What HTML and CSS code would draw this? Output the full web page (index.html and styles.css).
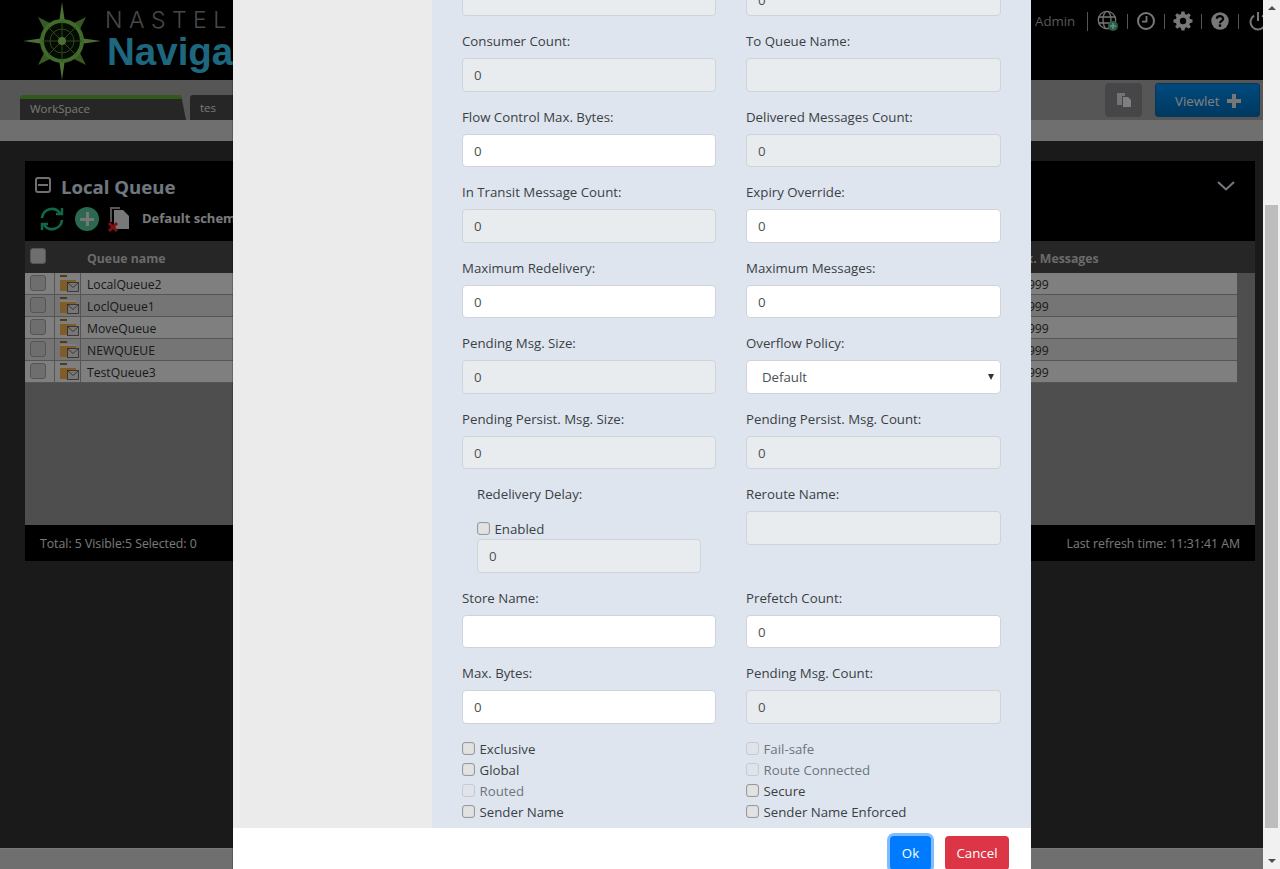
FILE: index.html
```html
<!DOCTYPE html>
<html lang="en">
<head>
  <meta charset="UTF-8" />
  <title>Navigator - Local Queue</title>
  <link rel="stylesheet" href="styles.css">
</head>
<body>

  <div class="page">
    <div class="top-header">
      <div class="logo">
        <svg class="logo-star" width="78" height="78" viewBox="0 0 78 78">
          <path d="M39 0 L42.5 24 L54 35.5 L78 39 L54 42.5 L42.5 54 L39 78 L35.5 54 L24 42.5 L0 39 L24 35.5 L35.5 24 Z" fill="#9ade66"/>
          <path d="M15 15 L27 21 L21 27 Z M63 15 L57 27 L51 21 Z M15 63 L21 51 L27 57 Z M63 63 L51 57 L57 51 Z" fill="#6fae48"/>
          <circle cx="39" cy="39" r="20" fill="#0a1405" stroke="#7fd455" stroke-width="4"/>
          <path d="M39 19 V59 M19 39 H59 M25 25 L53 53 M53 25 L25 53" stroke="#55953a" stroke-width="1"/>
          <circle cx="39" cy="39" r="12" fill="none" stroke="#55953a" stroke-width="1"/>
          <circle cx="39" cy="39" r="4" fill="#9ade66"/>
        </svg>
        <div class="logo-text">
          <div class="logo-nastel">NASTEL</div>
          <div class="logo-nav">Navigator</div>
        </div>
      </div>
      <div class="user-tools">
        <span class="user-name">Admin</span>
        <span class="tool">
          <svg width="22" height="22" viewBox="0 0 22 22" fill="none" stroke="#f0f0f0" stroke-width="1.3">
            <circle cx="10" cy="10" r="8.7"/><ellipse cx="10" cy="10" rx="4" ry="8.7"/>
            <path d="M2 7 H18 M2 13 H18"/>
            <circle cx="16" cy="16" r="5" fill="#3cc586" stroke="none"/>
            <path d="M13 16 H19 M16 13 V19" stroke="#fff" stroke-width="1.6"/>
          </svg>
        </span>
        <span class="tool">
          <svg width="20" height="20" viewBox="0 0 20 20" fill="none" stroke="#f0f0f0" stroke-width="2">
            <circle cx="10" cy="10" r="8"/><path d="M10.5 5 V10.7 H6" stroke-width="1.8"/>
          </svg>
        </span>
        <span class="tool">
          <svg width="20" height="20" viewBox="0 0 20 20">
            <path d="M8.4 1 H11.6 L12.1 3.6 L13.9 4.4 L16.1 2.9 L18.2 5.1 L16.7 7.2 L17.4 9 L20 9.5 V12.5 L17.4 13 L16.7 14.8 L18.2 17 L16.1 19.1 L13.9 17.6 L12.1 18.4 L11.6 21 H8.4 L7.9 18.4 L6.1 17.6 L3.9 19.1 L1.8 17 L3.3 14.8 L2.6 13 L0 12.5 V9.5 L2.6 9 L3.3 7.2 L1.8 5.1 L3.9 2.9 L6.1 4.4 L7.9 3.6 Z" transform="scale(.95) translate(.5 -.5)" fill="#f0f0f0"/>
            <circle cx="10" cy="10" r="3.2" fill="#000"/>
          </svg>
        </span>
        <span class="tool">
          <svg width="20" height="20" viewBox="0 0 20 20">
            <circle cx="10" cy="10" r="8.7" fill="#f0f0f0"/>
            <path d="M6.8 7.8 C6.8 4.2 13.2 4.2 13.2 7.8 C13.2 10 10 9.8 10 12.2" fill="none" stroke="#000" stroke-width="2.2"/>
            <rect x="8.8" y="13.4" width="2.4" height="2.4" fill="#000"/>
          </svg>
        </span>
        <span class="tool">
          <svg width="20" height="20" viewBox="0 0 20 20" fill="none" stroke="#f0f0f0" stroke-width="2">
            <path d="M6 4.6 A7.5 7.5 0 1 0 14 4.6"/><path d="M10 1 V10"/>
          </svg>
        </span>
      </div>
    </div>

    <div class="tab-bar">
      <div class="tabs">
        <div class="tab tab-active">WorkSpace</div>
        <div class="tab">tes</div>
      </div>
      <button class="copy-btn">
        <svg width="16" height="16" viewBox="0 0 16 16">
          <path d="M1 1 H9 V4 H6 V13 H1 Z" fill="#e6e6e6"/>
          <path d="M7 5 H12 L15 8 V15 H7 Z" fill="#ffffff"/>
        </svg>
      </button>
      <button class="viewlet-btn">Viewlet <span class="plus"></span></button>
    </div>
    <div class="sub-bar"></div>

    <div class="content">
      <div class="viewlet">
        <div class="viewlet-head">
          <div class="viewlet-title-row">
            <span class="collapse-box"></span>
            <span class="viewlet-title">Local Queue</span>
            <svg class="chevron" width="18" height="10" viewBox="0 0 18 10" fill="none" stroke="#e8f4ff" stroke-width="2">
              <path d="M1 1 L9 8.5 L17 1"/>
            </svg>
          </div>
          <div class="viewlet-tools">
            <svg width="26" height="26" viewBox="0 0 26 26" fill="none" stroke="#22d08e" stroke-width="2.6">
              <path d="M3 12 A10 10 0 0 1 21 7"/><path d="M23 14 A10 10 0 0 1 5 19"/>
              <path d="M17 8 H23 V2" stroke-width="2.4"/><path d="M9 18 H3 V24" stroke-width="2.4"/>
            </svg>
            <span class="add-circle"></span>
            <svg class="drop-icon" width="24" height="26" viewBox="0 0 24 26">
              <path d="M2 1 H12 V3 H4 V16 H2 Z" fill="#aaa"/>
              <path d="M6 4 H15 L21 10 V23 H6 Z" fill="#f0f0f0"/>
              <path d="M1 17 L9 25 M9 17 L1 25" stroke="#ff2020" stroke-width="3"/>
            </svg>
            <span class="schema-name">Default schema</span>
          </div>
        </div>

        <div class="grid-head">
          <span class="cell-check"><span class="check-big"></span></span>
          <span class="cell-icon"></span>
          <span class="cell-name">Queue name</span>
          <span class="cell-max">Max. Messages</span>
        </div>

        <div class="grid-body">
          <div class="grid-rows">
            <div class="grid-row">
              <span class="cell-check"><span class="check-big"></span></span>
              <span class="cell-icon"><svg class="queue-icon" width="20" height="18" viewBox="0 0 20 18"><path d="M1 1 H8 V3 H1 Z" fill="#a87820"/><path d="M1 4 H17 V6 H1 Z" fill="#fff"/><path d="M1 6 H17 V17 H1 Z" fill="#ffb850"/><rect x="8.5" y="8.5" width="11" height="9" fill="#eee" stroke="#555" stroke-width=".8"/><path d="M8.5 8.5 L14 13.5 L19.5 8.5" fill="none" stroke="#555" stroke-width=".8"/></svg></span>
              <span class="cell-name">LocalQueue2</span>
              <span class="cell-max">999999</span>
            </div>
            <div class="grid-row">
              <span class="cell-check"><span class="check-big"></span></span>
              <span class="cell-icon"><svg class="queue-icon" width="20" height="18" viewBox="0 0 20 18"><path d="M1 1 H8 V3 H1 Z" fill="#a87820"/><path d="M1 4 H17 V6 H1 Z" fill="#fff"/><path d="M1 6 H17 V17 H1 Z" fill="#ffb850"/><rect x="8.5" y="8.5" width="11" height="9" fill="#eee" stroke="#555" stroke-width=".8"/><path d="M8.5 8.5 L14 13.5 L19.5 8.5" fill="none" stroke="#555" stroke-width=".8"/></svg></span>
              <span class="cell-name">LoclQueue1</span>
              <span class="cell-max">999999</span>
            </div>
            <div class="grid-row">
              <span class="cell-check"><span class="check-big"></span></span>
              <span class="cell-icon"><svg class="queue-icon" width="20" height="18" viewBox="0 0 20 18"><path d="M1 1 H8 V3 H1 Z" fill="#a87820"/><path d="M1 4 H17 V6 H1 Z" fill="#fff"/><path d="M1 6 H17 V17 H1 Z" fill="#ffb850"/><rect x="8.5" y="8.5" width="11" height="9" fill="#eee" stroke="#555" stroke-width=".8"/><path d="M8.5 8.5 L14 13.5 L19.5 8.5" fill="none" stroke="#555" stroke-width=".8"/></svg></span>
              <span class="cell-name">MoveQueue</span>
              <span class="cell-max">999999</span>
            </div>
            <div class="grid-row">
              <span class="cell-check"><span class="check-big"></span></span>
              <span class="cell-icon"><svg class="queue-icon" width="20" height="18" viewBox="0 0 20 18"><path d="M1 1 H8 V3 H1 Z" fill="#a87820"/><path d="M1 4 H17 V6 H1 Z" fill="#fff"/><path d="M1 6 H17 V17 H1 Z" fill="#ffb850"/><rect x="8.5" y="8.5" width="11" height="9" fill="#eee" stroke="#555" stroke-width=".8"/><path d="M8.5 8.5 L14 13.5 L19.5 8.5" fill="none" stroke="#555" stroke-width=".8"/></svg></span>
              <span class="cell-name">NEWQUEUE</span>
              <span class="cell-max">999999</span>
            </div>
            <div class="grid-row">
              <span class="cell-check"><span class="check-big"></span></span>
              <span class="cell-icon"><svg class="queue-icon" width="20" height="18" viewBox="0 0 20 18"><path d="M1 1 H8 V3 H1 Z" fill="#a87820"/><path d="M1 4 H17 V6 H1 Z" fill="#fff"/><path d="M1 6 H17 V17 H1 Z" fill="#ffb850"/><rect x="8.5" y="8.5" width="11" height="9" fill="#eee" stroke="#555" stroke-width=".8"/><path d="M8.5 8.5 L14 13.5 L19.5 8.5" fill="none" stroke="#555" stroke-width=".8"/></svg></span>
              <span class="cell-name">TestQueue3</span>
              <span class="cell-max">999999</span>
            </div>
          </div>
          <div class="grid-side"></div>
        </div>

        <div class="viewlet-foot">
          <span>Total: 5 Visible:5 Selected: 0</span>
          <span>Last refresh time: 11:31:41 AM</span>
        </div>
      </div>
    </div>
    <div class="page-foot"></div>
  </div>

  <div class="backdrop"></div>

  <div class="modal">
    <div class="modal-main">
      <div class="modal-side"></div>
      <div class="form-panel">
        <div class="form-grid">
          <div class="field"><input class="ro" readonly></div>
          <div class="field"><input class="ro" value="0" readonly></div>

          <div class="field"><label>Consumer Count:</label><input class="ro" value="0" readonly></div>
          <div class="field"><label>To Queue Name:</label><input class="ro" readonly></div>

          <div class="field"><label>Flow Control Max. Bytes:</label><input value="0"></div>
          <div class="field"><label>Delivered Messages Count:</label><input class="ro" value="0" readonly></div>

          <div class="field"><label>In Transit Message Count:</label><input class="ro" value="0" readonly></div>
          <div class="field"><label>Expiry Override:</label><input value="0"></div>

          <div class="field"><label>Maximum Redelivery:</label><input value="0"></div>
          <div class="field"><label>Maximum Messages:</label><input value="0"></div>

          <div class="field"><label>Pending Msg. Size:</label><input class="ro" value="0" readonly></div>
          <div class="field">
            <label>Overflow Policy:</label>
            <div class="select-box">Default<span class="select-arrow"></span></div>
          </div>

          <div class="field"><label>Pending Persist. Msg. Size:</label><input class="ro" value="0" readonly></div>
          <div class="field"><label>Pending Persist. Msg. Count:</label><input class="ro" value="0" readonly></div>

          <div class="field field-nested">
            <label>Redelivery Delay:</label>
            <div class="check-line check-enabled"><span class="check"></span>Enabled</div>
            <input class="ro" value="0" readonly>
          </div>
          <div class="field"><label>Reroute Name:</label><input class="ro" readonly></div>

          <div class="field"><label>Store Name:</label><input></div>
          <div class="field"><label>Prefetch Count:</label><input value="0"></div>

          <div class="field"><label>Max. Bytes:</label><input value="0"></div>
          <div class="field"><label>Pending Msg. Count:</label><input class="ro" value="0" readonly></div>

          <div class="check-list">
            <div class="check-line"><span class="check"></span>Exclusive</div>
            <div class="check-line"><span class="check"></span>Global</div>
            <div class="check-line off"><span class="check"></span>Routed</div>
            <div class="check-line"><span class="check"></span>Sender Name</div>
          </div>
          <div class="check-list">
            <div class="check-line off"><span class="check"></span>Fail-safe</div>
            <div class="check-line off"><span class="check"></span>Route Connected</div>
            <div class="check-line"><span class="check"></span>Secure</div>
            <div class="check-line"><span class="check"></span>Sender Name Enforced</div>
          </div>
        </div>
      </div>
    </div>
    <div class="modal-footer">
      <button class="btn btn-ok">Ok</button>
      <button class="btn btn-cancel">Cancel</button>
    </div>
  </div>

  <div class="scrollbar">
    <span class="arrow-up"></span>
    <div class="scroll-track"><div class="scroll-thumb"></div></div>
    <span class="arrow-down"></span>
  </div>

</body>
</html>
```

FILE: styles.css
```css
* {
  box-sizing: border-box;
}
html, body {
  height: 100%;
}
body {
  margin: 0;
  overflow: hidden;
  position: relative;
  font-family: "Open Sans", sans-serif;
  font-size: 13.25px;
  line-height: 19.5px;
  color: #3a3f45;
}

/* Page under the dialog */
.page {
  width: 1263px;
  height: 869px;
  display: flex;
  flex-direction: column;
  background: #343434;
}
.top-header {
  height: 80px;
  background: #000;
  display: flex;
  justify-content: space-between;
  flex-shrink: 0;
}
.logo {
  display: flex;
  padding: 2px 0 0 23px;
  gap: 4px;
}
.logo-text {
  padding-top: 6px;
}
.logo-nastel {
  font-family: Inter, sans-serif;
  font-weight: 300;
  font-size: 23px;
  line-height: 24px;
  letter-spacing: 6.5px;
  color: #909090;
}
.logo-nav {
  font-family: "Liberation Sans", sans-serif;
  font-weight: bold;
  font-size: 38.5px;
  line-height: 40px;
  padding-left: 2px;
  color: #3ad0ff;
}
.user-tools {
  display: flex;
  align-items: center;
  height: 42px;
  overflow: hidden;
  width: 228px;
}
.user-name {
  color: #b0b0b0;
  width: 53px;
  flex-shrink: 0;
  border-right: 1px solid #aaa;
  line-height: 19px;
}
.tool {
  display: flex;
  justify-content: center;
  align-items: center;
  flex-shrink: 0;
  width: 37px;
  height: 15px;
  border-right: 1px solid #aaa;
}
.tool:nth-child(2) {
  width: 40px;
}
.tool:last-child {
  border-right: 0;
}

.tab-bar {
  height: 40px;
  background: #acacac;
  display: flex;
  flex-shrink: 0;
  padding: 3px 3px 0 20px;
}
.tabs {
  display: flex;
  align-items: flex-end;
  gap: 4px;
  flex: 1;
}
.tab {
  height: 25px;
  width: 166px;
  padding: 4px 10px 0;
  font-size: 11.5px;
  line-height: 18px;
  color: #eee;
  background: #4c4c4c;
  border-top-left-radius: 3px;
  clip-path: polygon(0 0, calc(100% - 5px) 0, 100% 100%, 0 100%);
}
.tab-active {
  border-top: 4px solid #5fb434;
  padding-top: 1px;
}
.copy-btn {
  width: 37px;
  height: 34px;
  margin-right: 13px;
  background: #8c8c90;
  border: 0;
  border-radius: 4px;
  display: flex;
  align-items: center;
  justify-content: center;
  padding: 0;
}
.viewlet-btn {
  width: 105px;
  height: 34px;
  border: 1px solid #0a6cae;
  border-radius: 3px;
  background: linear-gradient(#0094fa, #0072c2);
  color: #fff;
  font: 400 13.25px "Open Sans", sans-serif;
  padding: 2px 0 0 1px;
}
.plus {
  display: inline-block;
  width: 14px;
  height: 14px;
  vertical-align: -2px;
  margin-left: 4px;
  background:
    linear-gradient(#eee, #eee) center / 14px 4px no-repeat,
    linear-gradient(#eee, #eee) center / 4px 14px no-repeat;
}
.sub-bar {
  height: 21px;
  background: #dedede;
  flex-shrink: 0;
}

.content {
  flex: 1;
  padding: 20px 8px 0 25px;
}
.viewlet {
  width: 1230px;
  height: 400px;
  background: #9c9c9c;
  display: flex;
  flex-direction: column;
}
.viewlet-head {
  height: 80px;
  background: #000;
  padding: 13px 20px 0 10px;
  flex-shrink: 0;
}
.viewlet-title-row {
  display: flex;
  align-items: center;
  height: 26px;
}
.collapse-box {
  width: 16px;
  height: 16px;
  border: 2px solid #e0e0e0;
  border-radius: 3px;
  margin-right: 10px;
  margin-top: -4px;
  background: linear-gradient(#e0e0e0, #e0e0e0) center / 10px 2px no-repeat;
}
.viewlet-title {
  font-size: 18.6px;
  font-weight: 700;
  color: #e0f0ff;
  flex: 1;
}
.chevron {
  margin-top: -3px;
}
.viewlet-tools {
  display: flex;
  align-items: center;
  gap: 10px;
  margin-top: 6px;
  padding-left: 4px;
}
.add-circle {
  width: 24px;
  height: 24px;
  border-radius: 50%;
  background:
    linear-gradient(#eee, #eee) center / 14px 3px no-repeat,
    linear-gradient(#eee, #eee) center / 3px 14px no-repeat,
    #55d0a0;
}
.drop-icon {
  margin-left: -1px;
}
.schema-name {
  font-size: 13px;
  font-weight: 700;
  color: #f2f4f8;
}
.grid-head {
  height: 32px;
  background: #4c4c4c;
  display: flex;
  align-items: center;
  font-size: 12.3px;
  font-weight: 700;
  color: #d5d5d5;
  flex-shrink: 0;
}
.grid-head .cell-check {
  border: 0;
}
.grid-head .cell-name,
.grid-head .cell-max {
  padding-top: 3px;
}
.grid-head .check-big {
  margin-bottom: 3px;
}
.grid-body {
  display: flex;
  height: 110px;
  flex-shrink: 0;
}
.grid-rows {
  flex: 1;
}
.grid-side {
  width: 18px;
  background: #9c9c9c;
}
.grid-row {
  height: 22px;
  display: flex;
  align-items: center;
  background: #fff;
  border-bottom: 1px solid #aaa;
  color: #333;
  font-size: 12.2px;
}
.grid-row:nth-child(even) {
  background: #ebebeb;
}
.grid-row .cell-name,
.grid-row .cell-max {
  padding-top: 2px;
}
.cell-check {
  width: 30px;
  height: 100%;
  display: flex;
  align-items: center;
  padding-left: 5px;
  border-right: 1px solid #aaa;
  flex-shrink: 0;
}
.cell-icon {
  width: 26px;
  height: 100%;
  display: flex;
  align-items: center;
  padding-left: 4px;
  border-right: 1px solid #aaa;
  flex-shrink: 0;
}
.queue-icon {
  margin-top: -2px;
}
.grid-head .cell-icon {
  border: 0;
}
.cell-name {
  width: 926px;
  padding-left: 6px;
  flex-shrink: 0;
}
.check-big {
  width: 16px;
  height: 16px;
  margin-bottom: 2px;
  border: 1px solid #aaa;
  border-radius: 3px;
  background: #dcdcdc;
}
.viewlet-foot {
  margin-top: auto;
  height: 36px;
  background: #000;
  color: #f0f0f0;
  display: flex;
  justify-content: space-between;
  align-items: center;
  padding: 1px 15px 0;
  font-size: 12.25px;
}
.page-foot {
  height: 21px;
  background: #dedede;
  border-top: 1px solid #f4f4f4;
  flex-shrink: 0;
}

.backdrop {
  position: absolute;
  top: 0;
  left: 0;
  width: 1263px;
  height: 869px;
  background: rgba(0, 0, 0, 0.5);
}

/* Dialog */
.modal {
  position: absolute;
  top: 0;
  left: 232px;
  width: 799px;
  height: 869px;
  display: flex;
  flex-direction: column;
  background: #fff;
  background-clip: padding-box;
  border-left: 1px solid rgba(0, 0, 0, 0.2);
}
.modal-main {
  flex: 1;
  min-height: 0;
  display: flex;
  overflow: hidden;
}
.modal-side {
  width: 199px;
  background: #ebebeb;
  flex-shrink: 0;
}
.form-panel {
  flex: 1;
  background: #dfe5ee;
  padding: 0 30px 5.6px;
  display: flex;
  flex-direction: column;
  justify-content: flex-end;
}
.form-grid {
  display: grid;
  grid-template-columns: 254px 255px;
  column-gap: 30px;
}
.field {
  margin-bottom: 14.5px;
}
.field label {
  display: block;
  padding-top: 1.5px;
  margin-bottom: 6.5px;
}
.field input,
.select-box {
  display: block;
  width: 100%;
  height: 33.5px;
  padding: 6px 15px;
  font: 13.25px/19.5px "Open Sans", sans-serif;
  color: #495057;
  background: #fff;
  border: 1px solid #ced4da;
  border-radius: 4px;
  outline: none;
}
.field input.ro {
  background: #e9ecef;
}
.field input {
  padding-left: 11px;
}
.select-box {
  position: relative;
  padding-top: 7px;
}
.select-arrow {
  position: absolute;
  right: 6px;
  top: 13px;
  border: 3.5px solid transparent;
  border-top: 6px solid #333;
  border-bottom: 0;
}
.field-nested {
  padding: 0 15px;
}
.check-enabled {
  margin-top: 13.6px;
  margin-bottom: 0;
  height: 20px;
}
.field-nested label {
  margin-bottom: 0;
}
.check-list {
  display: flex;
  flex-direction: column;
}
.check-line {
  display: flex;
  align-items: center;
  height: 21px;
  padding-top: 2px;
}
.check {
  width: 13px;
  height: 13px;
  margin-right: 4.5px;
  border: 1px solid #9a9a9a;
  border-radius: 3px;
  background: #e2e2e2;
  box-shadow: inset 0 0 1px #aaa;
  flex-shrink: 0;
  position: relative;
  top: -1px;
}
.check-line.off {
  color: #6c757d;
}
.check-line.off .check {
  border-color: #c6cbd1;
  background: #e0e4ea;
  box-shadow: none;
}

.modal-footer {
  height: 41px;
  flex-shrink: 0;
  overflow: hidden;
  background: #fff;
  display: flex;
  justify-content: flex-end;
  gap: 14px;
  padding: 8px 22px 0 0;
}
.btn {
  height: 34px;
  border: 0;
  border-radius: 4px;
  color: #fff;
  font: 13.25px "Open Sans", sans-serif;
  padding: 0;
}
.btn-ok {
  width: 41px;
  background: #007bff;
  box-shadow: 0 0 0 3px rgba(0, 123, 255, 0.5);
}
.btn-cancel {
  width: 64px;
  background: #dc3545;
}

/* Browser scrollbar */
.scrollbar {
  position: absolute;
  top: 0;
  right: 0;
  width: 17px;
  height: 869px;
  background: #f1f1f1;
  display: flex;
  flex-direction: column;
  align-items: center;
}
.arrow-up,
.arrow-down {
  flex-shrink: 0;
  width: 0;
  height: 0;
  border-left: 4px solid transparent;
  border-right: 4px solid transparent;
}
.arrow-up {
  border-bottom: 4px solid #505050;
  margin-top: 6px;
}
.arrow-down {
  border-top: 4px solid #505050;
  margin-bottom: 6px;
}
.scroll-track {
  flex: 1;
  width: 100%;
  display: flex;
  flex-direction: column;
  justify-content: flex-end;
  padding: 0 2px 31px;
}
.scroll-thumb {
  height: 623px;
  background: #bdbdbd;
}
```
